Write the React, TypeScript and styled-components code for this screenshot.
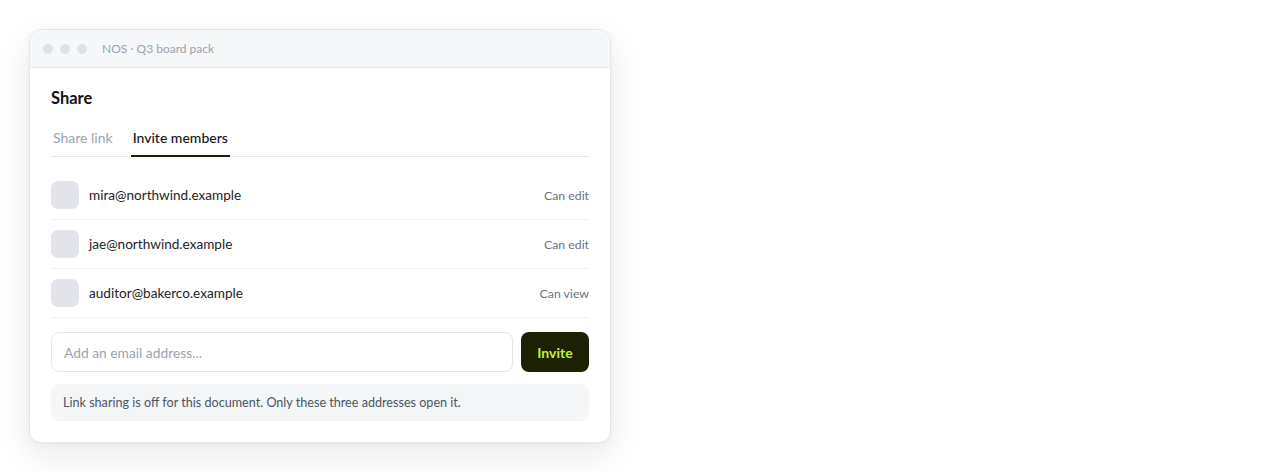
import React from "react";
import styled, { createGlobalStyle } from "styled-components";

const GlobalStyle = createGlobalStyle`
  html, body {
    margin: 0;
    padding: 0;
    background: #ffffff;
  }
  body {
    font-family: Lato, "Noto Sans", sans-serif;
    -webkit-font-smoothing: antialiased;
  }
`;

interface Member {
  email: string;
  role: string;
}

const members: Member[] = [
  { email: "mira@northwind.example", role: "Can edit" },
  { email: "jae@northwind.example", role: "Can edit" },
  { email: "auditor@bakerco.example", role: "Can view" },
];

const App: React.FC = () => {
  return (
    <Page>
      <GlobalStyle />
      <Window>
        <TitleBar>
          <Dots>
            <Dot />
            <Dot />
            <Dot />
          </Dots>
          <WindowTitle>NOS · Q3 board pack</WindowTitle>
        </TitleBar>
        <Body>
          <Heading>Share</Heading>
          <Tabs>
            <Tab>Share link</Tab>
            <Tab active>Invite members</Tab>
          </Tabs>
          <MemberList>
            {members.map((m) => (
              <MemberRow key={m.email}>
                <Avatar />
                <Email>{m.email}</Email>
                <Role>{m.role}</Role>
              </MemberRow>
            ))}
          </MemberList>
          <InviteRow>
            <EmailInput placeholder="Add an email address..." />
            <InviteButton>Invite</InviteButton>
          </InviteRow>
          <Note>
            Link sharing is off for this document. Only these three addresses
            open it.
          </Note>
        </Body>
      </Window>
    </Page>
  );
};
export default App;

const Page = styled.div`
  padding: 29px;
  height: 472px;
  box-sizing: border-box;
`;

const Window = styled.div`
  width: 582px;
  background: #ffffff;
  border: 1px solid #e4e6ea;
  border-radius: 12px;
  overflow: hidden;
  box-shadow: 0 12px 32px rgba(15, 23, 42, 0.09), 0 2px 6px rgba(15, 23, 42, 0.04);
  box-sizing: border-box;
`;

const TitleBar = styled.div`
  height: 37px;
  display: flex;
  align-items: center;
  gap: 15px;
  padding: 0 13px;
  background: #f6f7f9;
  border-bottom: 1px solid #e5e7eb;
`;

const Dots = styled.div`
  display: flex;
  gap: 7px;
`;

const Dot = styled.span`
  width: 10px;
  height: 10px;
  border-radius: 50%;
  background: #dfe1e5;
`;

const WindowTitle = styled.span`
  font-size: 12px;
  color: #9ca3af;
`;

const Body = styled.div`
  padding: 18px 21px 21px;
`;

const Heading = styled.h2`
  margin: 0;
  font-size: 16.5px;
  font-weight: 700;
  color: #111318;
  line-height: 24px;
`;

const Tabs = styled.div`
  display: flex;
  gap: 16px;
  margin-top: 18px;
  border-bottom: 1px solid #e5e7eb;
`;

const Tab = styled.div<{ active?: boolean }>`
  padding: 0 2px 7px;
  font-size: 14px;
  line-height: 20px;
  color: ${(p) => (p.active ? "#15171a" : "#9ca3af")};
  font-weight: ${(p) => (p.active ? 500 : 400)};
  border-bottom: 2px solid ${(p) => (p.active ? "#1c2103" : "transparent")};
  margin-bottom: -1px;
`;

const MemberList = styled.div`
  margin-top: 14px;
`;

const MemberRow = styled.div`
  display: flex;
  align-items: center;
  gap: 10px;
  height: 49px;
  border-bottom: 1px solid #f0f1f3;
  box-sizing: border-box;
`;

const Avatar = styled.div`
  width: 28px;
  height: 28px;
  border-radius: 7px;
  background: #e2e4e9;
  flex-shrink: 0;
`;

const Email = styled.span`
  flex: 1;
  font-size: 13.6px;
  color: #1f2328;
`;

const Role = styled.span`
  font-size: 12.3px;
  color: #6b7280;
`;

const InviteRow = styled.div`
  display: flex;
  gap: 8px;
  margin-top: 14px;
`;

const EmailInput = styled.input`
  flex: 1;
  height: 40px;
  box-sizing: border-box;
  border: 1px solid #e3e5e9;
  border-radius: 8px;
  padding: 0 12px;
  font-family: inherit;
  font-size: 13.8px;
  color: #1f2328;
  outline: none;
  &::placeholder {
    color: #9ca3af;
  }
`;

const InviteButton = styled.button`
  width: 68px;
  height: 40px;
  border: none;
  border-radius: 8px;
  background: #1c2103;
  color: #c6f12e;
  font-family: inherit;
  font-size: 14px;
  font-weight: 700;
  cursor: pointer;
`;

const Note = styled.div`
  margin-top: 12px;
  background: #f5f6f8;
  border-radius: 8px;
  padding: 9px 12px;
  font-size: 12.6px;
  line-height: 19px;
  color: #4b5563;
`;
